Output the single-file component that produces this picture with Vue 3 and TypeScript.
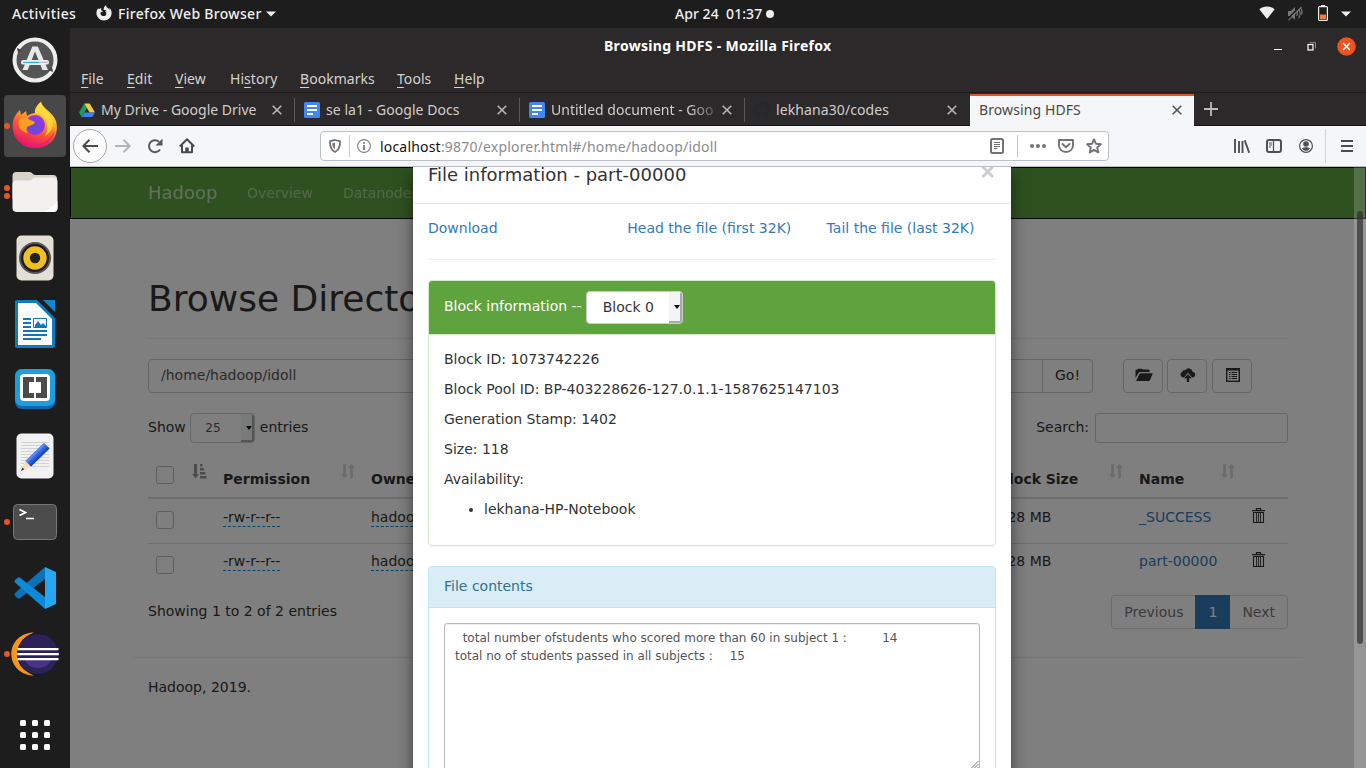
<script setup lang="ts">
interface MenuItem { pre: string; key: string; post: string; gap: number }
interface Tab { title: string; icon: 'drive' | 'docs' | 'github' | 'none'; active?: boolean; fade?: boolean; ls: number }
interface FileRow { perm: string; owner: string; block: string; name: string }

const menus: MenuItem[] = [
  { pre: '', key: 'F', post: 'ile', gap: 46 },
  { pre: '', key: 'E', post: 'dit', gap: 48 },
  { pre: '', key: 'V', post: 'iew', gap: 55 },
  { pre: 'Hi', key: 's', post: 'tory', gap: 70 },
  { pre: '', key: 'B', post: 'ookmarks', gap: 97 },
  { pre: '', key: 'T', post: 'ools', gap: 57 },
  { pre: '', key: 'H', post: 'elp', gap: 50 },
]
const tabs: Tab[] = [
  { title: 'My Drive - Google Drive', icon: 'drive', ls: 0 },
  { title: 'se la1 - Google Docs', icon: 'docs', ls: 0.05 },
  { title: 'Untitled document - Goo', icon: 'docs', fade: true, ls: 0 },
  { title: 'lekhana30/codes', icon: 'github', ls: 0.1 },
  { title: 'Browsing HDFS', icon: 'none', active: true, ls: 0.1 },
]
const rows: FileRow[] = [
  { perm: '-rw-r--r--', owner: 'hadoop', block: '128 MB', name: '_SUCCESS' },
  { perm: '-rw-r--r--', owner: 'hadoop', block: '128 MB', name: 'part-00000' },
]
const details: string[] = [
  'Block ID: 1073742226',
  'Block Pool ID: BP-403228626-127.0.1.1-1587625147103',
  'Generation Stamp: 1402',
  'Size: 118',
  'Availability:',
]
const contents = '  total number ofstudents who scored more than 60 in subject 1 :\t\t14\ntotal no of students passed in all subjects :\t15'
const grid = [0, 12, 24]
</script>

<template>
  <div class="desktop">
    <header class="topbar">
      <span class="act">Activities</span>
      <svg class="ffsym" width="16" height="16" viewBox="0 0 16 16"><path d="M2.200 3.200C.3 5.200-.1 8.600 1.200 11.200 2.500 14 5.200 15.600 8 15.600c4.200 0 7.600-3.300 7.600-7.500 0-2.200-.8-4.100-2.300-5.400.4 1 .5 1.600.4 2.200C12.800 2.900 10 3.200 10.200.2 8.200 1.200 7.500 3.100 7.700 5c1.200-.2 2.500.3 3.100 1.400-.6-.3-1.300-.2-1.700.1 1.700 1.100 1.700 3.800-.7 4.500-2.300.6-4.300-1.300-3.900-3.400.4-.6 1.500-.5 2.300-1 .2-.5-.9-.8-1.700-1.300.1-.9.2-1.700-.1-2.400-.9.300-1.500.8-1.900 1.300-.5-.2-.8-.5-.9-1z" fill="#eee"/></svg>
      <span class="app">Firefox Web Browser</span>
      <svg class="tri" width="10" height="6" viewBox="0 0 10 6"><path d="M0 .5h10L5 5.500z" fill="#eee"/></svg>
      <span class="clock">Apr 24&nbsp; 01:37</span><i class="dot"></i>
      <div class="status">
        <svg width="16" height="14" viewBox="0 0 16 14"><path d="M.3 3.200C4.500-.3 11.500-.3 15.700 3.200L8 13z" fill="#eee"/></svg>
        <svg width="16" height="15" viewBox="0 0 16 15" fill="none" stroke="#777"><path d="M1 5h3l4-4v13L4 10H1z" fill="#777" stroke="none"/><path d="M9.500 5q2 2.500 0 5M11.500 3q3.500 4.500 0 9M13.500 1.500q2 3 1.200 7" stroke-width="1.200"/><path d="M.5 13L13 .5" stroke="#1d1d1d" stroke-width="1.500"/><path d="M1.500 14.300L14.500 1" stroke-width="1.100"/></svg>
        <svg width="10" height="16" viewBox="0 0 10 16"><path d="M3 0h4v1.500H3z" fill="#eee"/><rect x=".6" y="1.600" width="8.800" height="13.800" rx="1" fill="none" stroke="#eee" stroke-width="1.200"/><path d="M2 9.500h6V14H2z" fill="#f47b42"/></svg>
        <svg width="10" height="6" viewBox="0 0 10 6"><path d="M0 .5h10L5 5.500z" fill="#eee"/></svg>
      </div>
    </header>

    <div class="body">
      <nav class="dock">
        <div class="slot">
          <svg width="46" height="46" viewBox="0 0 46 46"><circle cx="23" cy="23" r="20.500" fill="#555" stroke="#eee" stroke-width="4"/><path d="M5 11l5 2-4 3zM41 35l-5-2 4-3z" fill="#444"/><path d="M20.300 9.500h5.500L36 33h-5.500l-2-5H17.700l-2 5H10.500zM23 14.500L19.500 23.500h7.200z" fill="#e8e8e8" fill-rule="evenodd"/><rect x="9" y="23" width="28" height="4.600" rx="2.200" fill="#eee"/><path d="M11 24.800h16v1.200H11z" fill="#19b6ee"/><path d="M27 24.800h9v1.200h-9z" fill="#bbb"/></svg>
        </div>
        <div class="slot run on">
          <svg width="46" height="48" viewBox="0 0 46 48">
            <defs>
              <linearGradient id="fx" x1=".8" y1="0" x2=".35" y2="1"><stop offset="0" stop-color="#fff44f"/><stop offset=".35" stop-color="#ffb02e"/><stop offset=".62" stop-color="#ff5634"/><stop offset="1" stop-color="#e3106e"/></linearGradient>
              <radialGradient id="fp" cx=".45" cy=".6" r=".6"><stop offset="0" stop-color="#5b4fd8"/><stop offset="1" stop-color="#9c35dc"/></radialGradient>
            </defs>
            <path d="M8 9l1 5 5-4 1 5c3-2 6-3 8-3 0-5 3-9 6-11 2 7 12 10 15 19 4 14-5 27-21 27C10 47 .5 37 .6 25 .6 17 4 13 8 9z" fill="url(#fx)"/>
            <path d="M29 1c-5 4-7 8-6 11 10 1 16 12 10 23 8-5 11-14 5-21-3-4-8-7-9-13z" fill="#ffe13d" opacity=".75"/>
            <circle cx="23" cy="24" r="10" fill="url(#fp)"/>
            <path d="M7 19c4-3 8-3 11 0 2 1 4 1 5 2-1 3-4 3-6 4-3 1-3 4-1 7-7-1-11-6-9-13z" fill="#ff9c22"/>
            <path d="M3 33c7 14 31 16 40-4-2 11-10 18-20 18C13 47 6 41 3 33z" fill="#e9187a" opacity=".7"/>
          </svg>
        </div>
        <div class="slot run two">
          <svg width="46" height="42" viewBox="0 0 46 42"><path d="M.5 5q0-4 4-4h13q2 0 3 1.500T24 4h17q4 0 4 4v20H.5z" fill="#d8d3c8"/><path d="M.5 13.500q0-4 4-4h13q2 0 3-1.500t3.500-1.500h17q4.500 0 4.500 4V37q0 4-4.500 4h-36q-4.500 0-4.500-4z" fill="#f3f1ed"/><path d="M45.500 30L34 41h7q4.500 0 4.500-4z" fill="#fff"/></svg>
        </div>
        <div class="slot">
          <svg width="38" height="46" viewBox="0 0 38 46"><rect x=".5" y=".5" width="37" height="45" rx="5" fill="#e4dfd4"/><circle cx="19" cy="23" r="16" fill="#55555a"/><circle cx="19" cy="23" r="14" fill="#1c1a24"/><circle cx="19" cy="23" r="11.700" fill="#f0bf20"/><circle cx="19" cy="23" r="5.200" fill="#222"/></svg>
        </div>
        <div class="slot">
          <svg width="40" height="48" viewBox="0 0 40 48"><path d="M2 0h20l18 18v28q0 2-2 2H2q-2 0-2-2V2Q0 0 2 0z" fill="#0d7dc0"/><path d="M3 3h18l16 16v26H3z" fill="#fff"/><path d="M28 0h12v12z" fill="#1487cc"/><path d="M8 18h8v2H8zm0 4h8v2H8zm0 4h8v2H8zm0 4h24v2H8zm0 4h24v2H8zm0 4h18v2H8z" fill="#0e78b8"/><path d="M18.500 18.500h13v9h-13z" fill="none" stroke="#0e78b8"/><path d="M20 27v-2l3-4 3 4 2-2 3 3v1z" fill="#0e78b8"/></svg>
        </div>
        <div class="slot brk">
          <svg width="40" height="40" viewBox="0 0 40 40"><rect width="40" height="40" rx="7" fill="#1265ae"/><rect width="40" height="37" rx="7" fill="#1e9fdd"/><rect x="5" y="5" width="30" height="27" rx="4" fill="#fff"/><path d="M8 8h11v5h-5v11h5v5H8zM32 8H21v5h5v11h-5v5h11z" fill="#4b4b4b"/></svg>
        </div>
        <div class="slot">
          <svg width="38" height="46" viewBox="0 0 38 46"><rect x=".5" y=".5" width="37" height="45" rx="5" fill="#f1f1f1"/><path d="M5 9.500h28M5 12.500h28M5 15.500h28M5 18.500h28M5 21.500h28M5 24.500h28M5 27.500h28M5 30.500h28M5 33.500h28" stroke="#d2d2d2"/><path d="M5 38l4.500-10 5.500 5.500z" fill="#fbdcb8"/><path d="M5 38l1.500-3.500 2 2z" fill="#444"/><path d="M9.500 28L28 10l5.500 5.500L15 33.500z" fill="#2f62e0"/><path d="M9.500 28L28 10l1.800 1.800L11.300 30z" fill="#5a88f0"/><path d="M13.200 31.700L31.700 13.700 33.500 15.500 15 33.500z" fill="#1e49b8"/></svg>
        </div>
        <div class="slot run">
          <svg width="46" height="38" viewBox="0 0 46 38"><rect x="1.500" y="1.500" width="43" height="35" rx="4" fill="#4c4c4c" stroke="#777"/><path d="M7.500 6.500l6 3-6 3M14 15.500h8" fill="none" stroke="#fff" stroke-width="1.700"/></svg>
        </div>
        <div class="slot">
          <svg width="42" height="42" viewBox="0 0 42 42"><path d="M31 0v12L5 32 1 29q-1-1.500 0-3z" fill="#0a72b9"/><path d="M5 10L31 30v12L1 15.500q-1-1 0-2.500z" fill="#0a8ad8"/><path d="M31 0l11 5v32l-11 5z" fill="#25a7f2"/></svg>
        </div>
        <div class="slot run">
          <svg width="48" height="44" viewBox="0 0 48 44"><path d="M23 .5C10 .5.300 10 .300 22S10 43.500 23 43.500C13 39 8 31 8 22S13 5 23 .5z" fill="#f7941e"/><circle cx="27" cy="22" r="21" fill="#1a1538"/><circle cx="27" cy="22" r="20" fill="#2c2255"/><path d="M13 27h28q-4 9-14 9t-14-9z" fill="#483684"/><path d="M6.500 16h41v2.300h-41zm-.3 4.900h41.600v2.300H6.200zm.3 5h41v2.300h-41z" fill="#fff"/></svg>
        </div>
        <div class="apps">
          <svg width="30" height="30" viewBox="0 0 30 30" fill="#fff"><template v-for="y in grid" :key="y"><rect v-for="x in grid" :key="x" :x="x" :y="y" width="6" height="6" rx="1.500"/></template></svg>
        </div>
      </nav>

      <section class="window">
        <div class="titlebar">
          <span class="wtitle">Browsing HDFS - Mozilla Firefox</span>
          <div class="wctl">
            <svg width="8" height="9" viewBox="0 0 8 9"><path d="M0 7h8v1H0z" fill="#fff"/></svg>
            <svg width="9" height="9" viewBox="0 0 9 9" fill="none"><path d="M2.500.5h6v6" stroke="#888"/><rect x="1" y="2.500" width="5" height="5.500" stroke="#fff" stroke-width="1.200"/></svg>
            <svg width="19" height="19" viewBox="0 0 19 19"><circle cx="9.500" cy="9.500" r="9.300" fill="#e95420"/><path d="M6 6l7 7m0-7l-7 7" stroke="#fff" stroke-width="1.500"/></svg>
          </div>
        </div>
        <div class="menubar">
          <span v-for="m in menus" :key="m.key + m.post" :style="{ width: m.gap + 'px' }">{{ m.pre }}<u>{{ m.key }}</u>{{ m.post }}</span>
        </div>
        <div class="tabs">
          <div v-for="t in tabs" :key="t.title" class="tab" :class="{ active: t.active }">
            <svg v-if="t.icon === 'drive'" class="fav" width="16" height="16" viewBox="0 0 16 16"><path d="M5.300 1.500L0 10.500 2.700 15 8 6z" fill="#12a05c"/><path d="M5.300 1.500h5.400L16 10.500h-5.400z" fill="#fdc93c"/><path d="M5.400 10.500H16L13.300 15H2.700z" fill="#3f80ee"/></svg>
            <svg v-else-if="t.icon === 'docs'" class="fav" width="16" height="16" viewBox="0 0 16 16"><rect width="16" height="16" rx="1.500" fill="#4285f4"/><path d="M3 3h10v2H3zm0 4h10v2H3zm0 4h6v2H3z" fill="#fff"/></svg>
            <svg v-else-if="t.icon === 'github'" class="fav" width="16" height="16" viewBox="0 0 16 16"><path fill="#24292e" d="M8 0C3.580 0 0 3.580 0 8c0 3.540 2.290 6.530 5.470 7.590.4.070.55-.17.55-.38 0-.19-.01-.82-.01-1.490-2.010.37-2.530-.49-2.690-.94-.09-.23-.48-.94-.82-1.130-.28-.15-.68-.52-.01-.53.63-.01 1.080.58 1.230.82.72 1.210 1.870.87 2.330.66.07-.52.28-.87.51-1.070-1.780-.2-3.640-.89-3.640-3.950 0-.87.31-1.590.82-2.150-.08-.2-.36-1.020.08-2.120 0 0 .67-.21 2.200.82a7.600 7.600 0 014 0c1.530-1.040 2.200-.82 2.200-.82.44 1.100.16 1.920.08 2.120.51.56.82 1.270.82 2.150 0 3.070-1.870 3.750-3.650 3.950.29.25.54.73.54 1.480 0 1.070-.01 1.930-.01 2.200 0 .21.15.46.55.38A8 8 0 0016 8c0-4.420-3.580-8-8-8z"/></svg>
            <span class="tt" :class="{ fade: t.fade }" :style="{ letterSpacing: t.ls + 'px' }">{{ t.title }}</span>
            <svg class="cls" width="10" height="10" viewBox="0 0 10 10"><path d="M.7.700l8.600 8.600m0-8.600L.7 9.300" stroke="currentColor" stroke-width="1.600"/></svg>
          </div>
          <svg class="plus" width="14" height="14" viewBox="0 0 14 14"><path d="M7 0v14M0 7h14" stroke="#bbb" stroke-width="1.800"/></svg>
        </div>

        <div class="toolbar">
          <div class="back"><svg width="16" height="14" viewBox="0 0 16 14" fill="none" stroke="#4a4a4f" stroke-width="2"><path d="M16 7H1.500M7.500 .8L1.300 7l6.200 6.200"/></svg></div>
          <svg class="fwd" width="16" height="14" viewBox="0 0 16 14" fill="none" stroke="#b5b5b8" stroke-width="2"><path d="M0 7h14.500M8.500.8L14.700 7l-6.200 6.200"/></svg>
          <svg class="rel" width="16" height="16" viewBox="0 0 16 16"><path d="M13 11.500A6 6 0 1 1 12 3.700" fill="none" stroke="#58585c" stroke-width="2"/><path d="M15.500.5v7h-7z" fill="#58585c"/></svg>
          <svg class="home" width="16" height="16" viewBox="0 0 16 16" fill="none" stroke="#4a4a4f" stroke-width="2"><path d="M.8 8.500L8 1.300l7.200 7.200M3 7v7.200h10V7" stroke-linejoin="round"/><path d="M8 14v-4.500" stroke-width="3.500"/></svg>
          <div class="url">
            <svg class="shield" width="12" height="14" viewBox="0 0 12 14"><path d="M6 1L11 2.300C11.200 8 9.800 11 6 13 2.200 11 .8 8 1 2.300z" fill="none" stroke="#737377" stroke-width="1.800"/><path d="M6 3.500v6.800C4 9 3.300 7 3.400 4.300z" fill="#737377"/></svg>
            <i class="vl"></i>
            <svg class="info" width="14" height="14" viewBox="0 0 14 14"><circle cx="7" cy="7" r="6.400" fill="none" stroke="#808084" stroke-width="1.100"/><path d="M6.200 3h1.700v1.700H6.200zM6.200 6h1.700v5H6.200z" fill="#737377"/></svg>
            <span class="addr"><b>localhost</b>:9870/explorer.html#/home/hadoop/idoll</span>
            <svg class="reader" width="14" height="16" viewBox="0 0 14 16"><rect x="1" y="1" width="12" height="14" rx="1.500" fill="none" stroke="#737377" stroke-width="2"/><path d="M4 4.500h6M4 6.500h6M4 8.500h6M4 10.500h3.500" stroke="#737377"/></svg>
            <i class="vl"></i>
            <svg class="dots" width="16" height="4" viewBox="0 0 16 4" fill="#737377"><circle cx="2" cy="2" r="2"/><circle cx="8" cy="2" r="2"/><circle cx="14" cy="2" r="2"/></svg>
            <svg class="pocket" width="16" height="14" viewBox="0 0 16 14" fill="none" stroke="#737377" stroke-width="1.900"><path d="M1 1h14v5.500a7 6.500 0 0 1-14 0z" stroke-linejoin="round"/><path d="M4.500 5L8 8.300 11.500 5" stroke-linecap="round"/></svg>
            <svg class="star" width="16" height="16" viewBox="0 0 16 16"><path d="M8 1.300l2 4.500 4.900.5-3.700 3.200 1.100 4.900L8 11.900l-4.300 2.500 1.100-4.900L1.100 6.300 6 5.800z" fill="none" stroke="#737377" stroke-width="1.900" stroke-linejoin="round"/></svg>
          </div>
          <div class="tools">
            <svg width="16" height="14" viewBox="0 0 16 14" stroke="#4f4f54" stroke-width="1.900"><path d="M1 0v14M5 2v12M8.500 2v12M10.700 1.300l4.500 12.500"/></svg>
            <svg width="16" height="14" viewBox="0 0 16 14" fill="none" stroke="#4f4f54"><rect x="1" y="1" width="14" height="12" rx="2" stroke-width="2"/><path d="M7.500 1v12" stroke-width="1.300"/><path d="M3 4h3M3 6h3M3 8h2"/></svg>
            <svg width="14" height="14" viewBox="0 0 14 14"><circle cx="7" cy="7" r="6.400" fill="none" stroke="#4f4f54" stroke-width="1.200"/><circle cx="7" cy="5" r="2.800" fill="#4f4f54"/><path d="M2.800 9.300q4.200-2.300 8.400 0Q9.800 12 7 12T2.800 9.300z" fill="#4f4f54"/></svg>
            <i></i>
            <svg class="ham" width="12" height="12" viewBox="0 0 12 12" stroke="#4a4a4f" stroke-width="2"><path d="M0 1h12M0 6h12M0 11h12"/></svg>
          </div>
        </div>

        <main class="page">
          <div class="nav"><span class="brand">Hadoop</span><span class="n1">Overview</span><span class="n2">Datanodes</span></div>
          <div class="container">
            <h1>Browse Directory</h1>
            <div class="pathrow">
              <div class="path">/home/hadoop/idoll</div><div class="go">Go!</div>
              <div class="btn b1"><svg width="18" height="14" viewBox="0 0 18 14" fill="#333"><path d="M.5 10V2.500Q.5 1.500 1.500 1.500h1L3 .7h4l.6.800h6q1 0 1 1V4H5q-1 0-1.500 1z"/><path d="M1 13l3.500-7q.4-.8 1.300-.8h12L15 12.200q-.3.800-1.200.8z"/></svg></div>
              <div class="btn b2"><svg width="16" height="14" viewBox="0 0 16 14" fill="#333"><path d="M4 9.500H3a3 3 0 0 1-.5-5.800 2 2 0 0 1 2.800-1.500 4 4 0 0 1 7.300 1.500 3 3 0 0 1 .6 5.800h-1L8 4.800z"/><path d="M8 6.300l4 4H9.200V14H6.800v-3.700H4z"/></svg></div>
              <div class="btn b3"><svg width="14" height="14" viewBox="0 0 14 14"><rect x=".7" y=".7" width="12.600" height="12.600" fill="none" stroke="#333" stroke-width="1.400"/><path d="M.7 1.500h12.600" stroke="#333" stroke-width="2"/><path d="M3 4.500h1.500M5.500 4.500H11M3 6.500h1.500M5.500 6.500H11M3 8.500h1.500M5.500 8.500H11M3 10.500h1.500M5.500 10.500H11" stroke="#333"/></svg></div>
            </div>
            <div class="filter">
              <span>Show</span><div class="sel small"><span>25</span><i><b></b></i></div><span>entries</span>
              <span class="srch">Search:</span><div class="sbox"></div>
            </div>
            <div class="row head">
              <div class="c0"><i class="chk"></i>
                <svg class="asc" width="15" height="15" viewBox="0 0 15 15" fill="#999"><path d="M2 0h3v10h2l-3.500 4.500L0 10h2zM8 0h2.500v2.500H8zM8 4h4v2.500H8zM8 8h5.500v2.500H8zM8 12h6.500v2.500H8z"/></svg></div>
              <div>Permission</div><svg class="srt" width="14" height="15" viewBox="0 0 14 15" fill="#d6d6d6"><path d="M2.200 0h2.600v10.500H7l-3.500 4L0 10.500h2.200zM9.200 14.500h2.600V4H14L10.500 0 7 4h2.200z"/></svg>
              <div>Owner</div>
              <div class="bs">Block Size</div><svg class="srt" width="14" height="15" viewBox="0 0 14 15" fill="#d6d6d6"><path d="M2.200 0h2.600v10.500H7l-3.500 4L0 10.500h2.200zM9.200 14.500h2.600V4H14L10.500 0 7 4h2.200z"/></svg>
              <div>Name</div><svg class="srt" width="14" height="15" viewBox="0 0 14 15" fill="#d6d6d6"><path d="M2.200 0h2.600v10.500H7l-3.500 4L0 10.500h2.200zM9.200 14.500h2.600V4H14L10.500 0 7 4h2.200z"/></svg>
            </div>
            <div v-for="r in rows" :key="r.name" class="row">
              <div class="c0"><i class="chk"></i></div>
              <div><span class="ed">{{ r.perm }}</span></div><i></i>
              <div><span class="ed">{{ r.owner }}</span></div>
              <div>{{ r.block }}</div><i></i>
              <div class="link">{{ r.name }}</div>
              <svg class="bin" width="13" height="16" viewBox="0 0 13 16" fill="none" stroke="#333"><path d="M4.500 2V.7h4V2M0 2.700h13" stroke-width="1.300"/><path d="M1.500 4.500v10h10v-10z" stroke-width="1.100"/><path d="M4.500 5v9M6.500 5v9M8.500 5v9" stroke-width=".9"/></svg>
            </div>
            <div class="foot">
              <span>Showing 1 to 2 of 2 entries</span>
              <div class="pager"><span class="pv">Previous</span><span class="cur">1</span><span class="nx">Next</span></div>
            </div>
            <hr />
            <p class="copy">Hadoop, 2019.</p>
          </div>
          <div class="shade"></div>
          <div class="track"><i></i></div>

          <div class="modal">
            <div class="mhead"><span>File information - part-00000</span><svg width="14" height="14" viewBox="0 0 14 14"><path d="M1.500 1.500l10.500 10.500m0-10.500L1.500 12" stroke="#ccc" stroke-width="2.800"/></svg></div>
            <div class="mbody">
              <div class="links"><span>Download</span><span>Head the file (first 32K)</span><span>Tail the file (last 32K)</span></div>
              <div class="rule"></div>
              <div class="panel green">
                <div class="ph"><span>Block information --</span><div class="sel"><span>Block 0</span><i><b></b></i></div></div>
                <div class="pb"><p v-for="d in details" :key="d">{{ d }}</p><ul><li>lekhana-HP-Notebook</li></ul></div>
              </div>
              <div class="panel blue">
                <div class="ph">File contents</div>
                <div class="pb"><div class="area">{{ contents }}<svg width="10" height="10" viewBox="0 0 10 10" stroke="#777"><path d="M1 9.500L9.500 1M4 9.500L9.500 4M7 9.500L9.500 7"/></svg></div></div>
              </div>
            </div>
          </div>
        </main>
      </section>
    </div>
  </div>
</template>

<style>
body { margin: 0; overflow: hidden; }
</style>
<style scoped>
* { box-sizing: border-box; }
i { font-style: normal; display: block; }
svg { display: block; flex: none; }
.desktop { width: 1366px; height: 768px; overflow: hidden; background: #1d1d1d; font: 14px/20px "Noto Sans", sans-serif; white-space: nowrap; }
.topbar { height: 28px; display: flex; align-items: center; color: #f0f0f0; font-weight: 500; padding-left: 12px; }
.act { width: 84px; letter-spacing: .4px; }
.ffsym { margin-top: -2px; }
.app { margin-left: 6px; width: 148px; letter-spacing: .31px; }
.clock { margin-left: 399px; width: 91px; letter-spacing: .05px; }
.dot { width: 8px; height: 8px; border-radius: 50%; background: #f0f0f0; }
.status { margin-left: auto; display: flex; align-items: center; padding-right: 15px; }
.status svg:nth-child(1) { margin-top: -2px; }
.status svg:nth-child(2) { margin-left: 12px; margin-top: -2px; }
.status svg:nth-child(3) { margin-left: 15px; margin-top: -3px; }
.status svg:nth-child(4) { margin-left: 13px; margin-top: -1px; }
.body { display: flex; height: 740px; }
.dock { width: 70px; display: flex; flex-direction: column; }
.slot { height: 66px; flex: none; display: flex; align-items: center; justify-content: center; position: relative; }
.slot:first-child { margin-top: -1px; }
.brk { padding-bottom: 2px; }
.on::after { content: ""; position: absolute; inset: 2px 4px; background: #484848; border-radius: 4px; }
.on svg { position: relative; z-index: 1; margin-top: -2px; }
.run::before { content: ""; position: absolute; left: 4px; top: 30px; width: 6px; height: 6px; border-radius: 50%; background: #e95420; z-index: 1; }
.two::before { top: 26px; box-shadow: 0 8px #e95420; }
.apps { margin: 33px 0 0 20px; }
.window { width: 1296px; display: flex; flex-direction: column; background: #2c292a; }
.titlebar { height: 38px; flex: none; display: flex; align-items: center; color: #fff; font-weight: 700; padding: 0 10px 2px 534px; }
.wtitle { letter-spacing: .3px; }
.wctl { margin-left: auto; display: flex; align-items: center; }
.wctl svg:nth-child(2) { margin-left: 25px; }
.wctl svg:nth-child(3) { margin-left: 21px; }
.menubar { height: 27px; flex: none; display: flex; align-items: center; padding-left: 11px; color: #d5d3d0; border-bottom: 1px solid #1f1d1e; letter-spacing: .05px; }
.menubar u { text-underline-offset: 3px; }
.tabs { height: 33px; flex: none; display: flex; color: #d0cecb; border-bottom: 1px solid #151415; }
.tab { width: 225px; height: 32px; display: flex; align-items: center; padding: 2px 13px 0 9px; position: relative; }
.tab:not(.active)::after { content: ""; position: absolute; right: 0; top: 5px; width: 1px; height: 24px; background: #5a5859; }
.tab:nth-child(4)::after { display: none; }
.fav { margin-right: 6px; }
.tt { flex: 1; }
.fade { -webkit-mask-image: linear-gradient(90deg, #000 138px, transparent 172px); }
.cls { color: #b8b6b4; margin-left: 4px; }
.active { width: 224px; background: #f5f6f7; color: #4a4948; margin-top: 1px; height: 32px; border-top: 2px solid #e95420; padding: 0 12px 2px 9px; }
.active .cls { color: #55555a; }
.plus { margin: 9px 0 0 10px; }
.toolbar { height: 41px; flex: none; background: #f5f6f7; border-bottom: 1px solid #b8bcc4; display: flex; align-items: center; }
.back { width: 34px; height: 34px; margin-left: 3px; border: 1px solid #a9a9ab; border-radius: 50%; background: #fcfcfc; display: flex; align-items: center; justify-content: center; flex: none; }
.fwd { margin-left: 8px; }
.rel, .home { margin-left: 16px; }
.url { margin-left: 125px; width: 789px; height: 30px; border: 1px solid #bcc1c9; border-radius: 4px; background: #fff; display: flex; align-items: center; flex: none; }
.shield { margin-left: 8px; }
.vl { width: 1px; height: 22px; background: #c2c4c8; }
.url .shield + .vl { margin-left: 8px; }
.info { margin-left: 7px; }
.addr { margin-left: 9px; color: #8b8b8e; letter-spacing: .19px; margin-top: 1px; }
.addr b { font-weight: 400; color: #111; }
.reader { margin-left: auto; }
.reader + .vl { margin-left: 13px; }
.dots { margin-left: 12px; }
.pocket { margin-left: 12px; }
.star { margin: 0 6px 0 12px; }
.tools { margin-left: auto; display: flex; align-items: center; padding-right: 13px; }
.tools svg + svg { margin-left: 16px; }
.tools svg:nth-child(3) { margin-left: 17px; }
.tools i { width: 1px; height: 34px; background: #d2d4d8; margin-left: 12px; }
.ham { margin-left: 15px; }

.page { position: relative; height: 601px; background: #fff; overflow: hidden; font-family: "DejaVu Sans", sans-serif; color: #333; }
.nav { height: 52px; background: #5fa33e; border: 1px solid #080808; color: #fff; display: flex; align-items: center; padding-left: 77px; }
.brand { font-size: 18px; width: 99px; opacity: .65; }
.n1 { width: 96px; }
.nav .n1, .nav .n2 { opacity: .45; }
.container { width: 1170px; margin-left: 63px; padding: 0 15px; }
h1 { margin: 0; height: 120px; padding-top: 60px; font: 400 36px/40px "DejaVu Sans", sans-serif; border-bottom: 1px solid #eee; }
.pathrow { display: flex; margin-top: 20px; height: 34px; }
.path { width: 895px; border: 1px solid #ccc; border-radius: 4px 0 0 4px; padding: 5px 12px; color: #555; }
.go { width: 50px; border: 1px solid #ccc; border-left: 0; border-radius: 0 4px 4px 0; padding: 5px 12px; }
.btn { width: 40px; border: 1px solid #ccc; border-radius: 4px; display: flex; justify-content: center; padding: 8px 0 0 2px; }
.b1 { margin-left: 30px; } .b2 { margin-left: 4px; } .b3 { margin-left: 5px; }
.filter { display: flex; height: 30px; margin-top: 20px; line-height: 28px; }
.sel { display: flex; background: #fff; border: 1px solid #ccc; border-radius: 4px; width: 97px; height: 33px; margin-left: 4px; line-height: 31px; color: #333; overflow: hidden; }
.sel > span { flex: 1; padding-left: 16px; }
.sel i { width: 13px; background: #f3f4f5; border-right: 2px solid #a9a9a9; border-bottom: 2px solid #a9a9a9; display: flex; align-items: center; justify-content: center; padding: 1px 0 0 2px; }
.sel b { border: 3.500px solid transparent; border-top: 4px solid #000; border-bottom: 0; flex: none; margin-right: -3px; }
.small { width: 65px; height: 30px; margin: 0 5px 0 4px; font-size: 12px; line-height: 28px; color: #555; }
.small > span { padding-left: 14.500px; }
.srch { margin-left: auto; }
.sbox { margin-left: 6px; width: 193px; border: 1px solid #ccc; border-radius: 3px; }
.row { display: grid; grid-template-columns: 75px 118px 30px 627.500px 110.500px 30px 82px 67px; height: 45px; padding-top: 8px; }
.head { height: 56px; font-weight: 700; border-bottom: 2px solid #ddd; padding-top: 26px; }
.bs { letter-spacing: -.05px; }
.head + .row { border-bottom: 1px solid #ddd; }
.head + .row + .row { padding-top: 7px; }
.head + .row + .row .chk { margin-top: 5px; }
.c0 { display: flex; }
.chk { width: 18px; height: 18px; border: 1px solid #bbb; border-radius: 3px; margin: 4px 0 0 8px; flex: none; }
.head .chk { margin-top: -3px; }
.asc { margin: -5px 0 0 18px; }
.srt { margin-top: -5px; }
.ed { border-bottom: 1px dashed #0090dd; padding-bottom: 1px; }
.link, .links { color: #337ab7; }
.bin { margin: 1px 0 0 31px; }
.foot { display: flex; justify-content: space-between; height: 34px; margin-top: 6px; line-height: 32px; }
.pager { display: flex; }
.pager span { padding: 0 12px; border: 1px solid #ddd; color: #777; }
.pager .pv { border-right: 0; border-radius: 4px 0 0 4px; }
.pager .nx { border-left: 0; border-radius: 0 4px 4px 0; }
.pager .cur { background: #337ab7; border-color: #337ab7; color: #fff; }
hr { border: 0; border-top: 1px solid #eee; margin: 28px -15px 19px; }
.copy { margin: 0; }
.shade { position: absolute; inset: 0; background: rgba(0, 0, 0, .5); }
.track { position: absolute; right: 0; top: 0; bottom: 0; width: 12px; background: rgba(255, 255, 255, .18); }
.track i { margin: 44px 0 0 3px; width: 6px; height: 433px; border-radius: 3px; background: rgba(40, 40, 40, .65); }
.modal { position: absolute; left: 343px; top: 0; width: 598px; height: 640px; background: #fff; box-shadow: 0 5px 15px rgba(0, 0, 0, .5); }
.mhead { height: 37px; border-bottom: 1px solid #e5e5e5; padding: 0 16px 0 15px; display: flex; justify-content: space-between; font-size: 18px; line-height: 15px; }
.mhead svg { margin-top: -2px; }
.mbody { padding: 14px 15px; }
.links { display: grid; grid-template-columns: 199.300px 199.300px 1fr; }
.rule { height: 1px; background: #eee; margin: 21px 0 20px; }
.panel { border: 1px solid #d6e9c6; border-radius: 4px; margin-bottom: 20px; box-shadow: 0 1px 1px rgba(0, 0, 0, .05); }
.ph { padding: 9px 15px 10px; border-bottom: 1px solid #bce8f1; border-radius: 3px 3px 0 0; }
.green .ph { background: #5fa33e; color: #fff; border-color: #d6e9c6; display: flex; height: 54px; padding-top: 10px; line-height: 30px; }
.blue { border-color: #bce8f1; }
.blue .ph { background: #d9edf7; color: #31708f; height: 41px; }
.pb { padding: 14px 15px 16px; }
.pb p { margin: 0 0 10px; }
ul { margin: 0 0 10px; padding-left: 40px; }
.blue .pb { padding-top: 15px; }
.area { height: 150px; border: 1px solid #bbb; border-radius: 3px; box-shadow: inset 0 1px 1px rgba(0, 0, 0, .075); padding: 5px 10px; font-size: 12px; line-height: 18px; color: #555; white-space: pre; tab-size: 8; position: relative; }
.area svg { position: absolute; right: 0; top: 136px; }
</style>
